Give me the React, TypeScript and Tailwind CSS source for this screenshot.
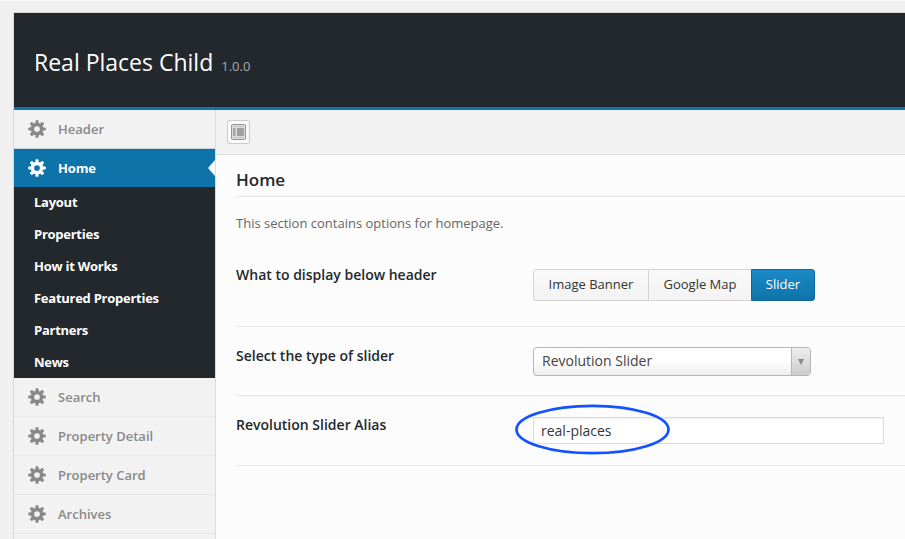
import type { ReactNode } from 'react';

const TEETH = [0, 45, 90, 135, 180, 225, 270, 315];

function Gear({ className }: { className: string }) {
  return (
    <svg viewBox="0 0 18 18" className={`h-[18px] w-[18px] shrink-0 ${className}`} fill="currentColor">
      <circle cx="9" cy="9" r="4.6" fill="none" stroke="currentColor" strokeWidth="3.5" />
      {TEETH.map((a) => (
        <path key={a} d="M7.4 3.6 V1 Q7.4 .2 8.2 .2 H9.8 Q10.6 .2 10.6 1 V3.6 Z" transform={`rotate(${a} 9 9)`} />
      ))}
    </svg>
  );
}

function MenuItem({ label, last }: { label: string; last?: boolean }) {
  return (
    <li className={`flex h-[39px] items-center border-b pl-[14px] text-[#888] ${last ? 'border-[#cfd3d6]' : 'border-[#e7e7e7]'}`}>
      <Gear className="text-[#888]" />
      <span className="ml-[12px] pt-[1px] text-[13px] font-semibold">{label}</span>
    </li>
  );
}

function Field({ label, className, labelClass, children }: { label: string; className: string; labelClass: string; children: ReactNode }) {
  return (
    <div className={`flex border-b border-[#e7e7e7] ${className}`}>
      <div className={`w-[297px] shrink-0 text-[14px] leading-5 font-semibold text-[#23282d] ${labelClass}`}>{label}</div>
      {children}
    </div>
  );
}

const SUB = ['Layout', 'Properties', 'How it Works', 'Featured Properties', 'Partners', 'News'];
const REST = ['Search', 'Property Detail', 'Property Card', 'Archives'];

export default function App() {
  return (
    <div className="h-[539px] w-[905px] overflow-hidden border-t border-[#fafafa] bg-[#f0f0f0] pt-[11px] pl-[13px] font-['Open_Sans','Noto_Sans',sans-serif]">
      <div className="h-[527px] border-t border-l border-[#d8d8d8]">
        <header className="flex h-[97px] items-baseline border-b-[3px] border-[#0e76a8] bg-[#23282d] pt-[33px] pl-[20px]">
          <h1 className="text-[23px] leading-[33px] text-white">Real Places Child</h1>
          <span className="ml-[8px] text-[13px] text-[#aaa]">1.0.0</span>
        </header>
        <div className="flex h-[429px]">
          <aside className="w-[202px] shrink-0 overflow-hidden border-r border-[#dcdcdc] bg-[#f2f2f2]">
            <ul>
              <MenuItem label="Header" last />
              <li className="relative flex h-[38px] items-center bg-[#0e73a8] pl-[14px] text-white">
                <Gear className="text-white" />
                <span className="ml-[12px] pt-[1px] text-[13px] font-bold tracking-[-0.15px]">Home</span>
                <span className="absolute top-[11px] right-0 h-0 w-0 border-y-[8px] border-r-[7px] border-y-transparent border-r-[#fcfcfc]" />
              </li>
              <li>
                <ul className="h-[191px] bg-[#23282d]">
                  {SUB.map((s) => (
                    <li key={s} className="h-[32px] pl-[20px] text-[13px] leading-[31px] font-bold tracking-[-0.26px] text-white">{s}</li>
                  ))}
                </ul>
              </li>
              {REST.map((s) => <MenuItem key={s} label={s} />)}
            </ul>
          </aside>
          <main className="min-w-0 flex-1 bg-[#fcfcfc]">
            <div className="h-[45px] border-b border-[#dedede] bg-[#f2f2f2] pt-[10px] pl-[11px]">
              <button className="flex h-[24px] w-[23px] items-center justify-center rounded-[2px] border border-[#ccc] bg-[#fafafa]">
                <svg viewBox="0 0 15 16" className="h-[16px] w-[15px]">
                  <rect x=".5" y=".5" width="14" height="15" rx="1" fill="#ddd" stroke="#969696" />
                  <path d="M2 2.5h11M2 13.5h11" stroke="#c4c4c4" />
                  <rect x="2" y="4" width="2.5" height="8" fill="#a6a6a6" />
                  <rect x="6" y="4" width="7" height="8" fill="#a0a0a0" />
                </svg>
              </button>
            </div>
            <div className="pl-[20px]">
              <h2 className="h-[42px] border-b border-[#e7e7e7] pt-[12px] text-[17px] leading-[25px] font-semibold text-[#23282d]">Home</h2>
              <p className="h-[36px] pt-[16px] text-[13px] leading-5 text-[#666]">This section contains options for homepage.</p>
              <Field label="What to display below header" className="h-[94px]" labelClass="pt-[32px]">
                <div className="mt-[36px] flex h-[32px] text-[13px]">
                  <button className="w-[116px] rounded-l-[3px] border border-[#d3d3d3] bg-linear-to-b from-[#f9f9f9] to-[#f3f3f3] text-[#333]">Image Banner</button>
                  <button className="w-[102px] border-y border-[#d3d3d3] bg-linear-to-b from-[#f9f9f9] to-[#f3f3f3] text-[#333]">Google Map</button>
                  <button className="w-[64px] rounded-r-[3px] border border-[#0e6797] bg-linear-to-b from-[#1a8bc9] to-[#1073aa] text-white">Slider</button>
                </div>
              </Field>
              <Field label="Select the type of slider" className="h-[69px]" labelClass="pt-[19px]">
                <div className="mt-[20px] flex h-[29px] w-[278px] overflow-hidden rounded-[4px] border border-[#b5b5b5] bg-linear-to-b from-[#fff] from-40% to-[#eee]">
                  <span className="flex-1 pl-[8px] text-[14px] leading-[26px] text-[#444]">Revolution Slider</span>
                  <span className="flex w-[19px] items-center justify-center border-l border-[#b5b5b5] bg-linear-to-b from-[#eee] to-[#ccc]">
                    <svg viewBox="0 0 6 6" className="h-[6px] w-[6px]"><path d="M0 0h6L3 6z" fill="#888" /></svg>
                  </span>
                </div>
              </Field>
              <Field label="Revolution Slider Alias" className="h-[70px]" labelClass="pt-[19px]">
                <div className="relative mt-[21px] h-[27px] w-[351px] border border-[#ddd] bg-white pl-[7px] text-[14px] leading-[26px] text-[#32373c] shadow-[inset_0_1px_2px_rgba(0,0,0,0.07)]">
                  real-places
                  <svg viewBox="0 0 156 52" className="absolute -top-[14px] -left-[20px] h-[52px] w-[156px]">
                    <ellipse cx="78.5" cy="25.5" rx="76" ry="23.7" fill="none" stroke="#1452ff" strokeWidth="2.7" />
                  </svg>
                </div>
              </Field>
            </div>
          </main>
        </div>
      </div>
    </div>
  );
}
